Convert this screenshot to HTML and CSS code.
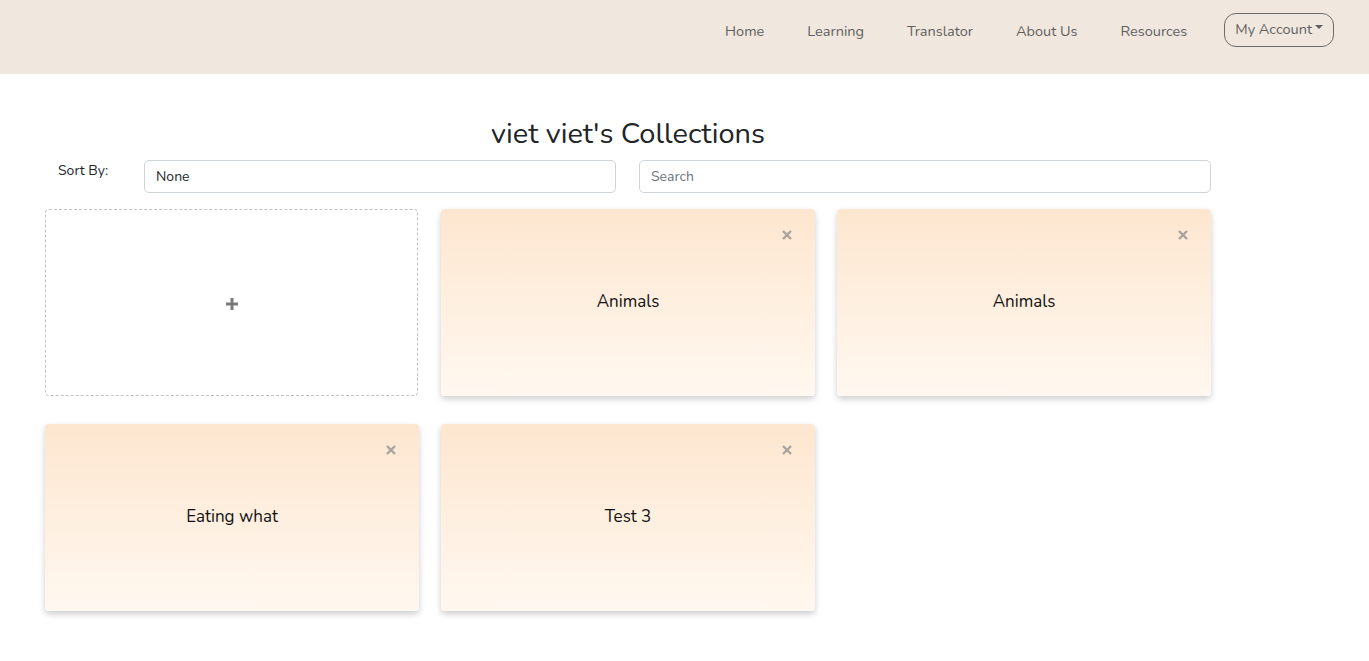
FILE: index.html
```html
<!DOCTYPE html>
<html lang="en">
<head>
<meta charset="utf-8">
<title>viet viet's Collections</title>
<link rel="stylesheet" href="styles.css">
</head>
<body>
<header class="navbar">
  <nav class="nav-links">
    <a class="nav-link" href="#">Home</a>
    <a class="nav-link" href="#">Learning</a>
    <a class="nav-link" href="#">Translator</a>
    <a class="nav-link" href="#">About Us</a>
    <a class="nav-link" href="#">Resources</a>
    <button class="account-btn">My Account<span class="caret"></span></button>
  </nav>
</header>
<main class="page">
  <h1 class="page-title">viet viet's Collections</h1>
  <div class="controls">
    <label class="sort-label">Sort By:</label>
    <div class="field">None</div>
    <div class="field placeholder">Search</div>
  </div>
  <div class="grid">
    <div class="card add-card">
      <svg class="plus" width="16" height="16" viewBox="0 0 16 16"><path d="M8 2v12M2 8h12" stroke="#7a7a7a" stroke-width="3" fill="none"/></svg>
    </div>
    <div class="card coll-card"><svg class="close" width="10" height="10" viewBox="0 0 10 10"><path d="M1 1l8 8M9 1l-8 8" stroke="#a9a39d" stroke-width="2.4" fill="none"/></svg><span class="card-title">Animals</span></div>
    <div class="card coll-card"><svg class="close" width="10" height="10" viewBox="0 0 10 10"><path d="M1 1l8 8M9 1l-8 8" stroke="#a9a39d" stroke-width="2.4" fill="none"/></svg><span class="card-title">Animals</span></div>
    <div class="card coll-card"><svg class="close" width="10" height="10" viewBox="0 0 10 10"><path d="M1 1l8 8M9 1l-8 8" stroke="#a9a39d" stroke-width="2.4" fill="none"/></svg><span class="card-title">Eating what</span></div>
    <div class="card coll-card"><svg class="close" width="10" height="10" viewBox="0 0 10 10"><path d="M1 1l8 8M9 1l-8 8" stroke="#a9a39d" stroke-width="2.4" fill="none"/></svg><span class="card-title">Test 3</span></div>
  </div>
</main>
</body>
</html>
```
FILE: styles.css
```css
* { box-sizing: border-box; }
body {
  margin: 0;
  font-family: "Nunito", "Lato", "Noto Sans", sans-serif;
  background: #fff;
  color: #212529;
}
.navbar {
  height: 74px;
  background: #f0e7de;
  display: flex;
  justify-content: flex-end;
  align-items: flex-start;
  padding-right: 35px;
  padding-top: 13px;
}
.nav-links {
  display: flex;
  align-items: center;
  height: 34px;
}
.nav-link {
  color: #5f5f5f;
  text-decoration: none;
  font-size: 14.5px;
  margin-left: 43px;
  padding-top: 2px;
}
.nav-link:first-child { margin-left: 0; }
.account-btn {
  margin-left: 37px;
  height: 34px;
  padding: 0 10px 2px 10px;
  border: 1px solid #6c6c6c;
  border-radius: 12px;
  background: transparent;
  color: #5f5f5f;
  font: inherit;
  font-size: 14.5px;
  display: flex;
  align-items: center;
}
.caret {
  width: 0;
  height: 0;
  border-left: 4px solid transparent;
  border-right: 4px solid transparent;
  border-top: 4px solid #5f5f5f;
  margin-left: 3px;
  margin-top: -4px;
}
.page {
  width: 1166px;
  margin-left: 45px;
  padding-top: 40px;
  padding-bottom: 40px;
}
.page-title {
  margin: 0;
  text-align: center;
  font-weight: 400;
  font-size: 29px;
  line-height: 40px;
  color: #212529;
  height: 46px;
}
.controls {
  display: grid;
  grid-template-columns: 76px 472px 572px;
  column-gap: 23px;
  align-items: start;
}
.sort-label {
  font-size: 14px;
  padding-left: 13px;
  padding-top: 1px;
  color: #212529;
}
.field {
  height: 33px;
  border: 1px solid #ced4da;
  border-radius: 5px;
  padding: 0 11px;
  display: flex;
  align-items: center;
  font-size: 14px;
  color: #212529;
}
.field.placeholder { color: #6c757d; }
.grid {
  margin-top: 16px;
  display: grid;
  grid-template-columns: repeat(3, 374px);
  column-gap: 22px;
  row-gap: 28px;
}
.card {
  height: 187px;
  border-radius: 4px;
  position: relative;
  display: flex;
  align-items: center;
  justify-content: center;
}
.add-card {
  border: 1px dashed #c2c2c2;
  width: 373px;
}
.plus { margin-top: 2px; }
.coll-card {
  background: linear-gradient(to bottom, #fde6cf, #fff8f0);
  box-shadow: 0 3px 6px rgba(0, 0, 0, 0.2);
}
.card-title {
  font-size: 17px;
  color: #111;
  margin-top: -2px;
}
.close {
  position: absolute;
  top: 21px;
  right: 23px;
}
```
